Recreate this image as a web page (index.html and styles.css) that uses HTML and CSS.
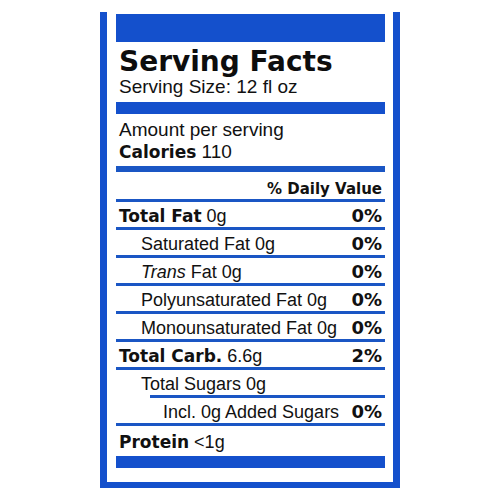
FILE: index.html
```html
<!DOCTYPE html>
<html>
<head>
<meta charset="utf-8">
<link rel="stylesheet" href="styles.css">
</head>
<body>
<div class="label">
  <div class="bar bar-top"></div>
  <div class="title-block">
    <div class="title">Serving Facts</div>
    <div class="size">Serving Size: 12 fl oz</div>
  </div>
  <div class="bar bar-mid"></div>
  <div class="amount-block">
    <div class="amount">Amount per serving</div>
    <div class="calories"><b>Calories</b> 110</div>
  </div>
  <div class="thick"></div>
  <div class="row dv"><b class="dv-text">% Daily Value</b></div>
  <div class="row"><span><b>Total Fat</b> 0g</span><b>0%</b></div>
  <div class="row sub"><span>Saturated Fat 0g</span><b>0%</b></div>
  <div class="row sub"><span><i>Trans</i> Fat 0g</span><b>0%</b></div>
  <div class="row sub"><span>Polyunsaturated Fat 0g</span><b>0%</b></div>
  <div class="row sub"><span>Monounsaturated Fat 0g</span><b>0%</b></div>
  <div class="row"><span><b>Total Carb.</b> 6.6g</span><b>2%</b></div>
  <div class="row sub short-line"><span>Total Sugars 0g</span></div>
  <div class="row subsub"><span>Incl. 0g Added Sugars</span><b>0%</b></div>
  <div class="row last"><span><b>Protein</b> &lt;1g</span></div>
  <div class="bar bar-bottom"></div>
</div>
</body>
</html>
```

FILE: styles.css
```css
html, body {
  margin: 0;
  padding: 0;
  background: #ffffff;
}

body {
  font-family: "Liberation Sans", Arial, sans-serif;
  color: #111111;
}

.label {
  box-sizing: border-box;
  width: 300px;
  height: 476px;
  margin: 12px 0 0 100px;
  border-left: 7px solid #1450cc;
  border-right: 7px solid #1450cc;
  border-bottom: 6px solid #1450cc;
  padding: 2px 8px 0 9px;
  display: flex;
  flex-direction: column;
}

.bar {
  background: #1450cc;
  flex: none;
}

.bar-top { height: 28px; }
.bar-mid { height: 12px; }
.bar-bottom { height: 12px; }

b {
  font-family: "DejaVu Sans", sans-serif;
  font-weight: bold;
  font-size: 17px;
}

.title-block {
  height: 60px;
  box-sizing: border-box;
  padding: 6px 0 0 3px;
}

.title {
  font-family: "DejaVu Sans", sans-serif;
  font-weight: bold;
  font-size: 28px;
  line-height: 28px;
  color: #0d0d0d;
}

.size {
  font-size: 19px;
  line-height: 22px;
}

.amount-block {
  height: 52px;
  box-sizing: border-box;
  padding: 5px 0 0 3px;
  font-size: 19px;
  line-height: 22px;
}

.thick {
  height: 6px;
  background: #1a56c4;
  flex: none;
}

.row {
  flex: none;
  box-sizing: border-box;
  height: 28px;
  padding: 4px 3px 0 3px;
  border-bottom: 3px solid #1a56c4;
  display: flex;
  justify-content: space-between;
  align-items: baseline;
  font-size: 18px;
  line-height: 20px;
  white-space: nowrap;
}

.row b {
  font-size: 18px;
}

.row span b {
  font-size: 17px;
}

.dv {
  height: 30px;
  padding-top: 7px;
  justify-content: flex-end;
}

.row .dv-text {
  font-size: 15px;
}

.sub {
  padding-left: 25px;
}

.subsub {
  padding-left: 47px;
}

.short-line {
  border-bottom: none;
  padding-bottom: 3px;
  background: linear-gradient(#1a56c4, #1a56c4) no-repeat right bottom / calc(100% - 34px) 3px;
}

.last {
  height: 30px;
  padding-top: 6px;
  border-bottom: none;
}
```
